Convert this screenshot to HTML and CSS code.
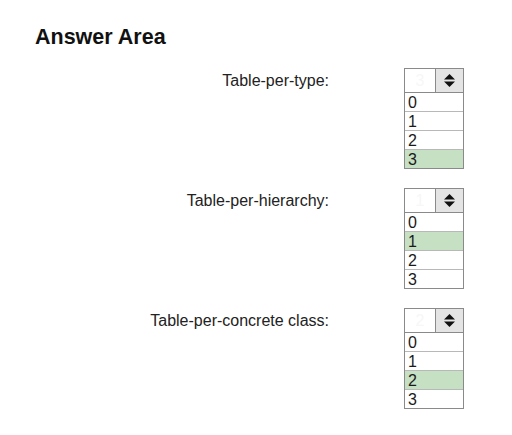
FILE: index.html
```html
<!DOCTYPE html>
<html lang="en">

<head>
    <meta charset="UTF-8">
    <meta name="viewport" content="width=device-width, initial-scale=1.0">
    <title>Answer Area</title>
    <link rel="stylesheet" href="styles.css">
</head>

<body>
    <h1 class="title">Answer Area</h1>

    <div class="answers">
        <div class="label">Table-per-type:</div>
        <div class="dropdown">
            <div class="dropdown-head">
                <div class="dropdown-value">3</div>
                <div class="spinner">
                    <svg width="11" height="13" viewBox="0 0 11 13">
                        <polygon points="0,5.5 5.5,0 11,5.5" fill="#111" />
                        <polygon points="0,7.5 11,7.5 5.5,13" fill="#111" />
                    </svg>
                </div>
            </div>
            <ul class="options">
                <li>0</li>
                <li>1</li>
                <li>2</li>
                <li class="selected">3</li>
            </ul>
        </div>

        <div class="label">Table-per-hierarchy:</div>
        <div class="dropdown">
            <div class="dropdown-head">
                <div class="dropdown-value">1</div>
                <div class="spinner">
                    <svg width="11" height="13" viewBox="0 0 11 13">
                        <polygon points="0,5.5 5.5,0 11,5.5" fill="#111" />
                        <polygon points="0,7.5 11,7.5 5.5,13" fill="#111" />
                    </svg>
                </div>
            </div>
            <ul class="options">
                <li>0</li>
                <li class="selected">1</li>
                <li>2</li>
                <li>3</li>
            </ul>
        </div>

        <div class="label">Table-per-concrete class:</div>
        <div class="dropdown">
            <div class="dropdown-head">
                <div class="dropdown-value">2</div>
                <div class="spinner">
                    <svg width="11" height="13" viewBox="0 0 11 13">
                        <polygon points="0,5.5 5.5,0 11,5.5" fill="#111" />
                        <polygon points="0,7.5 11,7.5 5.5,13" fill="#111" />
                    </svg>
                </div>
            </div>
            <ul class="options">
                <li>0</li>
                <li>1</li>
                <li class="selected">2</li>
                <li>3</li>
            </ul>
        </div>
    </div>
</body>

</html>
```

FILE: styles.css
```css
body {
    margin: 0;
    padding: 0;
    background-color: white;
    color: #1a1a1a;
    font-family: "Liberation Sans", Arial, sans-serif;
}

.title {
    margin: 0;
    padding: 24px 0 0 35px;
    font-size: 21.5px;
    line-height: 26px;
    font-weight: bold;
    color: #111;
}

.answers {
    display: grid;
    grid-template-columns: 329px 60px;
    column-gap: 75px;
    row-gap: 19px;
    margin-top: 18px;
    align-items: start;
}

.label {
    text-align: right;
    font-size: 16px;
    line-height: 25px;
    color: #222;
}

.dropdown {
    border: 1px solid #8a8a8a;
    width: 58px;
}

.dropdown-head {
    display: flex;
    height: 23px;
    border-bottom: 1px solid #8a8a8a;
}

.dropdown-value {
    width: 30px;
    border-right: 1px solid #8a8a8a;
    color: #f7f7f7;
    font-size: 16px;
    line-height: 23px;
    text-align: center;
}

.spinner {
    flex: 1;
    background-color: #e4e4e4;
    display: flex;
    align-items: center;
    justify-content: center;
}

.options {
    list-style-type: none;
    margin: 0;
    padding: 0;
}

.options li {
    height: 18px;
    line-height: 19px;
    padding-left: 3px;
    font-size: 16px;
    color: #1a1a1a;
    border-top: 1px solid #b8b8b8;
}

.options li:first-child {
    border-top: none;
}

.options li.selected {
    background-color: #c6e0c3;
}
```
